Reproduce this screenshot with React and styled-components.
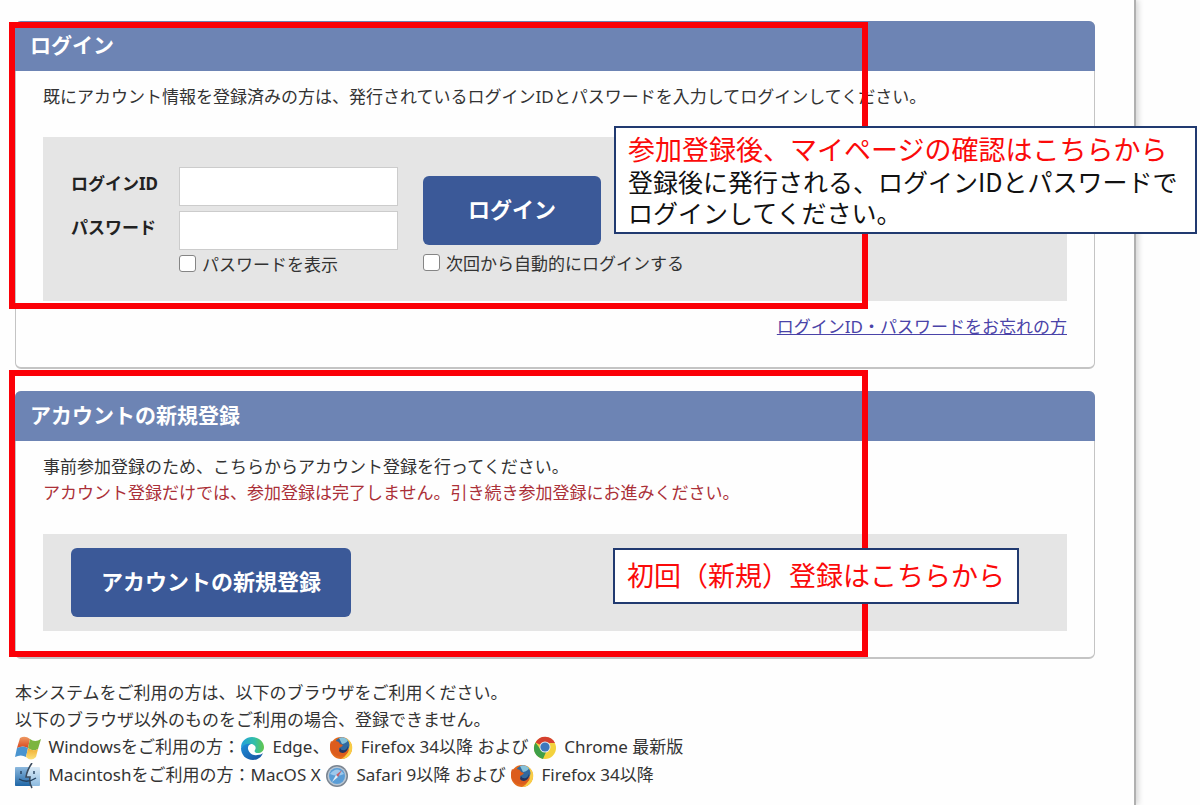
import styled, { createGlobalStyle } from "styled-components";
import { useState } from "react";

function WindowsIcon(){
    return(
        <Icon width="26" height="24" viewBox="0 0 26 24" aria-hidden="true">
            <defs>
                <linearGradient id="winRed" x1="0" y1="0" x2="0" y2="1">
                    <stop offset="0" stopColor="#ee9a63" />
                    <stop offset="1" stopColor="#d9481f" />
                </linearGradient>
                <linearGradient id="winYellow" x1="0" y1="0" x2="0" y2="1">
                    <stop offset="0" stopColor="#f0a92c" />
                    <stop offset="1" stopColor="#fbe27a" />
                </linearGradient>
            </defs>
            <path d="M5 2 Q10 -1 15 3 L13 12 Q8 9 2 12 Z" fill="url(#winRed)" />
            <path d="M15 3 Q20 7 26 3 L23 13 Q18 16 13 12 Z" fill="#7cb53f" />
            <path d="M2 12 Q8 9 13 12 L11 21 Q6 18 0 21 Z" fill="#4a94cf" />
            <path d="M13 12 Q18 16 23 13 L21 21 Q16 26 11 21 Z" fill="url(#winYellow)" />
        </Icon>
    );
}

function MacIcon(){
    return(
        <Icon width="26" height="26" viewBox="0 0 26 26" aria-hidden="true">
            <defs>
                <linearGradient id="macDark" x1="0" y1="0" x2="0" y2="1">
                    <stop offset="0" stopColor="#8db9de" />
                    <stop offset="1" stopColor="#1f66a6" />
                </linearGradient>
                <linearGradient id="macLight" x1="0" y1="0" x2="0" y2="1">
                    <stop offset="0" stopColor="#dcebf7" />
                    <stop offset="1" stopColor="#8dbbe0" />
                </linearGradient>
            </defs>
            <rect x="0" y="4" width="25" height="19" rx="1" fill="url(#macLight)" />
            <path d="M1 4 H15 Q12 9 11 14 H15 Q15 19 16 23 H1 Q0 23 0 22 V5 Q0 4 1 4 Z" fill="url(#macDark)" />
            <path d="M17 0 Q12 7 11 14 H15 Q14 20 17 25" fill="none" stroke="#3c4c5e" strokeWidth="1.6" />
            <path d="M6 8 V11 M19 8 V11 M4 16 Q12 21 21 15" fill="none" stroke="#24405e" strokeWidth="1.4" />
        </Icon>
    );
}

function EdgeIcon(){
    return(
        <Icon width="25" height="25" viewBox="0 0 25 25" aria-hidden="true">
            <defs>
                <linearGradient id="edgeTop" x1="0" y1="0" x2="1" y2="0">
                    <stop offset="0" stopColor="#22a0dd" />
                    <stop offset="0.6" stopColor="#33bfa6" />
                    <stop offset="1" stopColor="#63c64a" />
                </linearGradient>
                <linearGradient id="edgeLow" x1="0" y1="0" x2="1" y2="1">
                    <stop offset="0" stopColor="#1f8fda" />
                    <stop offset="1" stopColor="#144f9c" />
                </linearGradient>
            </defs>
            <path d="M1 12 C1 5 6 1 12 1 C19 1 24 6 24 11 C24 15 21 17 18 17 C15 17 14 15 15 14 C17 11 14 8 11 8 C7 8 3 10 1 12 Z" fill="url(#edgeTop)" />
            <path d="M1 12 C3 9 7 7 11 8 C8 9 8 11 8 13 C9 17 13 20 17 19 C20 19 22 18 23 17 C21 22 17 24 13 24 C6 24 1 19 1 12 Z" fill="url(#edgeLow)" />
        </Icon>
    );
}

function FirefoxIcon(){
    return(
        <Icon width="24" height="24" viewBox="0 0 24 24" aria-hidden="true">
            <circle cx="12" cy="12" r="11" fill="#e36a1c" />
            <path d="M17 2 C22 5 24 9 23 14 C22 20 17 23 12 23 C18 20 20 15 19 9 Z" fill="#f8cc45" />
            <circle cx="13" cy="9" r="7.5" fill="#31699f" />
            <path d="M10 2 Q15 0 19 4 Q18 7 13 8 Z" fill="#86c2da" />
            <path d="M2 5 Q3 6 6 5 Q10 5 11 8 L14 9 Q13 11 10 12 Q10 15 14 15 Q18 16 20 12 Q20 18 14 20 Q6 22 2 15 Q0 10 2 5 Z" fill="#dc5c1d" />
            <path d="M11 12 Q12 15 16 14 Q18 13 19 10 Q19 16 14 17 Q11 17 10 15 Z" fill="#22335f" />
        </Icon>
    );
}

function ChromeIcon(){
    return(
        <Icon width="24" height="24" viewBox="0 0 24 24" aria-hidden="true">
            <circle cx="12" cy="12" r="11" fill="#f3d23d" />
            <path d="M12 11 L2.5 6.5 A11 11 0 0 1 22 7 L12 7 Z" fill="#d5402f" />
            <path d="M2.5 6.5 L8 14 L13 16 L10 23 A11 11 0 0 1 2.5 6.5 Z" fill="#3f9f48" />
            <circle cx="12" cy="11" r="5.5" fill="#e9eef3" />
            <circle cx="12" cy="11" r="4.6" fill="#3f78bd" />
        </Icon>
    );
}

function SafariIcon(){
    return(
        <Icon width="24" height="24" viewBox="0 0 24 24" aria-hidden="true">
            <circle cx="12" cy="12" r="11" fill="#7b8591" />
            <circle cx="12" cy="12" r="9.5" fill="#b9c6d3" />
            <circle cx="12" cy="12" r="8" fill="#5a9dd6" />
            <path d="M5 10 Q12 1 19 10 Q12 13 5 10 Z" fill="#9cc8ec" />
            <path d="M17 6 L13 13 L11 11 Z" fill="#c4606c" />
            <path d="M7 18 L11 11 L13 13 Z" fill="#e3edf6" />
        </Icon>
    );
}

function LoginForm(){
    const [showPassword, setShowPassword] = useState(false);

    return(
        <Form onSubmit={e => e.preventDefault()}>
            <Fields>
                <FieldLabel htmlFor="loginId">ログインID</FieldLabel>
                <TextInput id="loginId" type="text" />
                <FieldLabel htmlFor="password">パスワード</FieldLabel>
                <TextInput id="password" type={showPassword ? "text" : "password"} />
                <CheckLine $column={2}>
                    <Check type="checkbox" checked={showPassword} onChange={() => setShowPassword(!showPassword)} />
                    パスワードを表示
                </CheckLine>
            </Fields>
            <Submit>
                <Button type="submit">ログイン</Button>
                <CheckLine>
                    <Check type="checkbox" />
                    次回から自動的にログインする
                </CheckLine>
            </Submit>
        </Form>
    );
}

export default function App(){
    return(
        <>
            <GlobalStyle />
            <Page>
                <Panel $height={348}>
                    <Title>ログイン</Title>
                    <Body>
                        <Text>既にアカウント情報を登録済みの方は、発行されているログインIDとパスワードを入力してログインしてください。</Text>
                        <LoginForm />
                        <Forgot>
                            <a href="#forgot">ログインID・パスワードをお忘れの方</a>
                        </Forgot>
                    </Body>
                    <LoginFrame />
                    <LoginNote>
                        <NoteTitle>参加登録後、マイページの確認はこちらから</NoteTitle>
                        <NoteText>登録後に発行される、ログインIDとパスワードで<br />ログインしてください。</NoteText>
                    </LoginNote>
                </Panel>

                <Panel $height={268}>
                    <Title>アカウントの新規登録</Title>
                    <Body>
                        <Text>事前参加登録のため、こちらからアカウント登録を行ってください。</Text>
                        <Text $warning>アカウント登録だけでは、参加登録は完了しません。引き続き参加登録にお進みください。</Text>
                        <RegisterBox>
                            <Button type="button" $wide>アカウントの新規登録</Button>
                        </RegisterBox>
                    </Body>
                    <RegisterFrame />
                    <RegisterNote>
                        <NoteTitle>初回（新規）登録はこちらから</NoteTitle>
                    </RegisterNote>
                </Panel>

                <Footer>
                    <Line>本システムをご利用の方は、以下のブラウザをご利用ください。</Line>
                    <Line>以下のブラウザ以外のものをご利用の場合、登録できません。</Line>
                    <Line>
                        <WindowsIcon /> Windowsをご利用の方：<EdgeIcon /> Edge、<FirefoxIcon /> Firefox 34以降 および <ChromeIcon /> Chrome 最新版
                    </Line>
                    <Line>
                        <MacIcon /> Macintoshをご利用の方：MacOS X <SafariIcon /> Safari 9以降 および <FirefoxIcon /> Firefox 34以降
                    </Line>
                </Footer>
            </Page>
        </>
    );
}

const GlobalStyle = createGlobalStyle`
    * {
        box-sizing: border-box;
    }

    body {
        margin: 0;
        background: #fefefe;
        color: #333333;
        font-family: "Noto Sans", "Noto Sans CJK JP", sans-serif;
        font-size: 17px;
        line-height: 26px;
        overflow-x: hidden;
    }

    p, h2 {
        margin: 0;
    }

    button, input {
        font-family: inherit;
    }
`

const Page = styled.main`
    min-height: 100vh;
    margin-right: 64px;
    padding: 21px 39px 12px 15px;
    border-right: 2px solid #b0b0b0;
    box-shadow: 2px 0 6px #d0d0d0;
`

const Panel = styled.section`
    position: relative;
    min-height: ${props => props.$height}px;
    border: 1px solid #c4c4c4;
    border-bottom-width: 2px;
    border-radius: 6px;

    & + & {
        margin-top: 22px;
    }
`

const Title = styled.h2`
    margin: -1px -1px 0;
    padding: 10px 15px 12px;
    border-radius: 6px 6px 0 0;
    background: #6d84b4;
    color: white;
    font-size: 21px;
    line-height: 28px;
    font-weight: 700;
`

const Body = styled.div`
    padding: 13px 27px 0;
`

const Text = styled.p`
    color: ${props => props.$warning ? "#ab3038" : "#333333"};
`

const Form = styled.form`
    display: flex;
    gap: 25px;
    min-height: 164px;
    margin-top: 27px;
    padding: 30px 28px 0;
    background: #e5e5e5;
`

const Fields = styled.div`
    display: grid;
    grid-template-columns: 108px 219px;
    grid-template-rows: 39px 39px 26px;
    align-content: start;
    row-gap: 5px;
`

const FieldLabel = styled.label`
    padding-top: 4px;
    color: #222222;
    font-weight: 700;
`

const TextInput = styled.input`
    width: 100%;
    height: 39px;
    padding: 0 8px;
    border: 1px solid #cccccc;
    background: white;
    font-size: 17px;
`

const CheckLine = styled.label`
    grid-column: ${props => props.$column || "auto"};
    display: flex;
    align-items: center;
    gap: 6px;
    height: 20px;
    white-space: nowrap;
`

const Check = styled.input`
    appearance: none;
    width: 17px;
    height: 17px;
    margin: 0 0 4px;
    border: 1px solid #858585;
    border-radius: 3px;
    background: white;

    &:checked {
        background: #3b5998;
    }
`

const Submit = styled.div`
    display: flex;
    flex-direction: column;
    align-items: flex-start;
    gap: 9px;
    padding-top: 9px;
`

const Button = styled.button`
    width: ${props => props.$wide ? "280px" : "178px"};
    height: 69px;
    padding-bottom: 6px;
    border: none;
    border-radius: 6px;
    background: #3b5998;
    color: white;
    font-size: 22px;
    font-weight: 700;
`

const Forgot = styled.p`
    margin-top: 13px;
    text-align: right;

    a {
        color: #4a43a8;
    }
`

const RegisterBox = styled.div`
    display: flex;
    margin-top: 28px;
    padding: 14px 28px;
    background: #e5e5e5;
`

const Frame = styled.div`
    position: absolute;
    left: -7px;
    right: 226px;
    border: 6px solid #fb0007;
    pointer-events: none;
`

const LoginFrame = styled(Frame)`
    top: 0;
    bottom: 58px;
`

const RegisterFrame = styled(Frame)`
    top: -22px;
    bottom: 0;
`

const Note = styled.aside`
    position: absolute;
    border: 2px solid #213a70;
    background: white;
    font-family: "Noto Sans CJK JP", sans-serif;
    white-space: nowrap;
`

const LoginNote = styled(Note)`
    top: 104px;
    left: 598px;
    padding: 4px 17px 4px 12px;
`

const RegisterNote = styled(Note)`
    top: 156px;
    left: 597px;
    padding: 8px 12px 10px;
`

const NoteTitle = styled.p`
    color: #fb0a0a;
    font-size: 27px;
    line-height: 34px;
`

const NoteText = styled.p`
    color: #111111;
    font-size: 25px;
    line-height: 31px;
`

const Footer = styled.footer`
    margin-top: 20px;
`

const Line = styled.p`
    line-height: 27px;
    white-space: nowrap;
`

const Icon = styled.svg`
    margin-right: 3px;
    vertical-align: middle;
`
